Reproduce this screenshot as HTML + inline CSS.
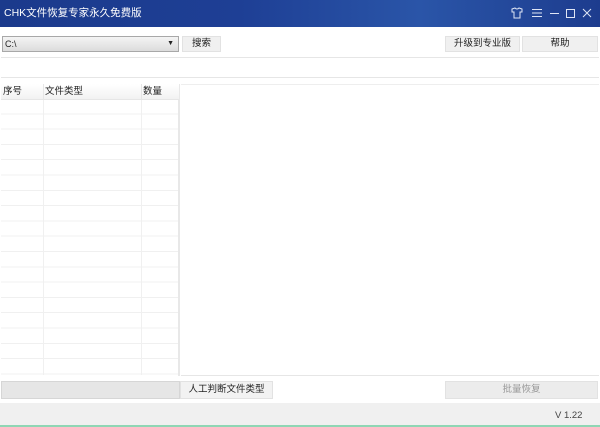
<!DOCTYPE html>
<html><head><meta charset="utf-8"><style>
*{margin:0;padding:0;box-sizing:border-box}
body{width:600px;height:427px;overflow:hidden;background:#fff;font-family:"Liberation Sans","Noto Sans CJK SC",sans-serif;font-size:9.5px;color:#222;position:relative}
.a{position:absolute}
.title{left:0;top:0;width:600px;height:27px;background:linear-gradient(90deg,#1b3a8c 0%,#1e3f95 40%,#2a55a8 70%,#1d3c8e 100%);color:#fff;font-size:10.5px;line-height:27px;padding-left:4px}
.btn{background:#f0f0f0;border:1px solid #e2e2e2;text-align:center;line-height:14px;font-size:9.5px}
</style></head><body>
<div class="a title">CHK文件恢复专家永久免费版</div>
<svg class="a" style="left:508px;top:6px" width="90" height="14" viewBox="0 0 90 14" fill="none" stroke="#dfe6f5" stroke-width="1">
<path d="M4 3 L7 2 Q9 4 11 2 L14 3 L14 6 L12 6 L12 12 L6 12 L6 6 L4 6 Z"/>
<path d="M24 3.5h10M24 7h10M24 10.5h10"/>
<path d="M42 7.5h9"/>
<rect x="58.5" y="3.5" width="8" height="8"/>
<path d="M75 3l8 8M83 3l-8 8"/>
</svg>
<div class="a" style="left:2px;top:36px;width:177px;height:16px;border:1px solid #a8a8a8;background:linear-gradient(#f4f4f4,#dcdcdc);line-height:14px;padding-left:2px;font-size:9px">C:\<span style="position:absolute;right:4px;top:0;font-size:7px">▼</span></div>
<div class="a btn" style="left:182px;top:36px;width:39px;height:16px">搜索</div>
<div class="a btn" style="left:445px;top:36px;width:75px;height:16px">升级到专业版</div>
<div class="a btn" style="left:522px;top:36px;width:76px;height:16px">帮助</div>
<div class="a" style="left:1px;top:57px;width:598px;height:21px;border:1px solid #e6e6e6;border-left:none;border-right:none"></div>
<div class="a" style="left:1px;top:84px;width:179px;height:292px;border-right:2px solid #e8e8e8;background:repeating-linear-gradient(#fff 0,#fff 14.3px,#f0f0f0 14.3px,#f0f0f0 15.3px);background-position:0 15px"></div>
<div class="a" style="left:43px;top:100px;width:1px;height:275px;background:#f0f0f0"></div>
<div class="a" style="left:141px;top:100px;width:1px;height:275px;background:#f0f0f0"></div>
<div class="a" style="left:1px;top:84px;width:178px;height:16px;background:linear-gradient(#fff,#f2f2f2);border-bottom:1px solid #e6e6e6;line-height:16px">
<span class="a" style="left:2px">序号</span><span class="a" style="left:42px;border-left:1px solid #e6e6e6;height:16px;padding-left:1px">文件类型</span><span class="a" style="left:140px;border-left:1px solid #e6e6e6;height:16px;padding-left:1px">数量</span></div>
<div class="a" style="left:181px;top:84px;width:418px;height:292px;border-top:1px solid #eee;border-bottom:1px solid #e6e6e6"></div>
<div class="a" style="left:1px;top:381px;width:179px;height:18px;background:#e6e6e6;border:1px solid #d6d6d6"></div>
<div class="a btn" style="left:180px;top:381px;width:93px;height:18px;line-height:16px;background:#f2f2f2">人工判断文件类型</div>
<div class="a btn" style="left:445px;top:381px;width:153px;height:18px;line-height:16px;color:#999;background:#ececec">批量恢复</div>
<div class="a" style="left:0;top:403px;width:600px;height:22px;background:#f0f0f0"></div>
<div class="a" style="left:555px;top:410px;font-size:9.5px;color:#444">V 1.22</div>
<div class="a" style="left:0;top:425px;width:600px;height:2px;background:#8fd6b4"></div>
</body></html>
